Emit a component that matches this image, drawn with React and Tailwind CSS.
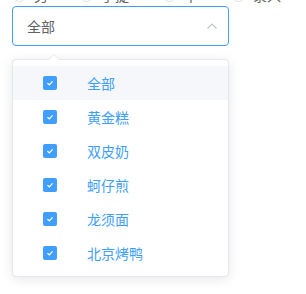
const options = ["全部", "黄金糕", "双皮奶", "蚵仔煎", "龙须面", "北京烤鸭"]
const radios = ["男", "手提", "中", "录入"]

function Check() {
  return (
    <span className="w-[14px] h-[14px] rounded-[2px] bg-[#409eff] flex items-center justify-center">
      <svg width="10" height="10" viewBox="0 0 10 10" fill="none">
        <path d="M2.4 5.1 L4.3 6.8 L7.6 3.4" stroke="white" strokeWidth="1.2" />
      </svg>
    </span>
  )
}

export default function App() {
  return (
    <div
      className="w-[306px] h-[294px] bg-white overflow-hidden text-[14px]"
      style={{ fontFamily: '"Noto Sans CJK SC", "Noto Sans", sans-serif' }}
    >
      {/* radio row, mostly scrolled off the top */}
      <div className="flex items-center h-[14px] -mt-[12px] pl-[13px] text-[#606266]">
        {radios.map((r, i) => (
          <div key={i} className={"flex items-center gap-[8px] " + (i === 0 ? "w-[67px]" : i === 1 ? "w-[83px]" : "w-[69px]")}>
            <span className="w-[13px] h-[13px] rounded-full border border-[#dcdfe6]" />
            <span>{r}</span>
          </div>
        ))}
      </div>

      <div className="ml-[12px] mt-[4px] w-[217px] h-[40px] border border-[#409eff] rounded-[4px] flex items-center justify-between pl-[14px] pr-[10px] text-[#606266]">
        <span>全部</span>
        <svg width="12" height="8" viewBox="0 0 12 8" fill="none">
          <path d="M1.5 6.5 L6 2 L10.5 6.5" stroke="#c0c4cc" strokeWidth="1.2" />
        </svg>
      </div>

      <div className="relative ml-[12px] mt-[13px] w-[217px] border border-[#e4e7ed] rounded-[4px] bg-white shadow-[0_2px_12px_0_rgba(0,0,0,0.1)] py-[6px]">
        <span className="absolute -top-[6px] left-[35px] w-0 h-0 border-x-[6px] border-x-transparent border-b-[6px] border-b-[#e4e7ed]" />
        <span className="absolute -top-[5px] left-[35px] w-0 h-0 border-x-[6px] border-x-transparent border-b-[6px] border-b-white" />
        {options.map((o, i) => (
          <div
            key={i}
            className={"h-[34px] flex items-center pl-[30px] text-[#409eff] " + (i === 0 ? "bg-[#f5f7fa]" : "")}
          >
            <Check />
            <span className="ml-[30px]">{o}</span>
          </div>
        ))}
      </div>
    </div>
  )
}
